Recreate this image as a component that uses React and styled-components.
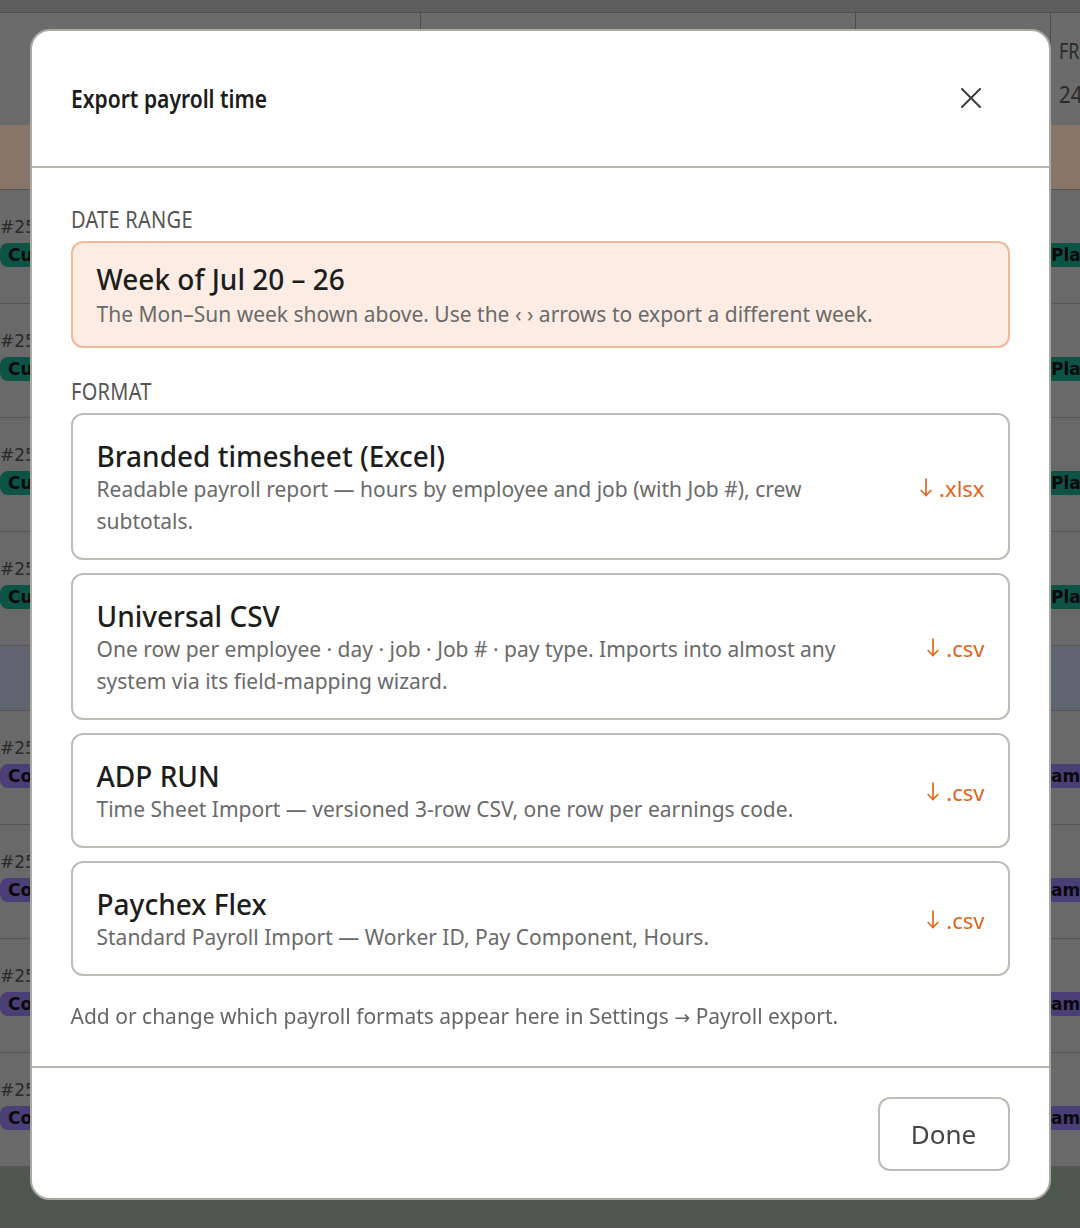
import React from "react";
import styled, { createGlobalStyle } from "styled-components";

const GlobalStyle = createGlobalStyle`
  html, body { margin: 0; padding: 0; }
  body {
    font-family: "Noto Sans", "Open Sans", sans-serif;
    background: #afafaf;
  }
  * { box-sizing: border-box; }
`;

/* narrow display face: Noto Sans squeezed horizontally */
const narrowFace = `
  font-family: "Noto Sans", Roboto, sans-serif;
  transform-origin: left center;
`;

/* ---------- schedule behind the dialog ---------- */

const Schedule = styled.div`
  width: 1080px;
  min-height: 1228px;
  display: flex;
  flex-direction: column;
  background: #849384;
`;

const TopBar = styled.div`
  height: 13px;
  background: #9d9d9d;
  border-bottom: 1px solid #828282;
`;

const DayHeader = styled.div`
  height: 112px;
  display: grid;
  grid-template-columns: 420px 435px 195px 1fr;
  background: #b2b2b2;
`;

const DayCell = styled.div`
  border-left: ${(p) => (p.$first ? "none" : "1px solid #828282")};
  padding: 24px 0 0 8px;
  display: flex;
  flex-direction: column;
  align-items: flex-start;
  gap: 12px;
  color: #494949;
`;

const DayName = styled.span`
  ${narrowFace}
  font-size: 21px;
  transform: scaleX(0.85);
`;

const DayNum = styled.span`
  ${narrowFace}
  font-size: 24px;
  transform: scaleX(0.85);
`;

const Band = styled.div`
  height: ${(p) => p.$h}px;
  background: ${(p) => p.$bg};
  border-bottom: 1px solid #8e8e8e;
`;

const CrewRow = styled.div`
  height: 114px;
  display: flex;
  justify-content: space-between;
  background: #afafaf;
  border-bottom: 1px solid #8e8e8e;
`;

const JobCell = styled.div`
  padding-top: 27px;
  display: flex;
  flex-direction: column;
  align-items: flex-start;
  gap: 6px;
  width: ${(p) => p.$w || "auto"};
  overflow: hidden;
`;

const JobNo = styled.span`
  font-family: "DejaVu Sans", sans-serif;
  font-size: 17px;
  line-height: 20px;
  color: #464646;
`;

const Chip = styled.span`
  height: 24px;
  display: inline-flex;
  align-items: center;
  padding: ${(p) => (p.$flat ? "0 4px 0 1px" : "0 10px 0 8px")};
  border-radius: ${(p) => (p.$flat ? "3px" : "8px")};
  background: ${(p) => p.$bg};
  font-family: "DejaVu Sans", sans-serif;
  font-weight: 700;
  font-size: 17px;
  color: #111;
  white-space: nowrap;
`;

/* ---------- dialog ---------- */

const Overlay = styled.div`
  position: fixed;
  inset: 0;
  background: rgba(0, 0, 0, 0.4);
  display: flex;
  align-items: center;
  justify-content: center;
`;

const Dialog = styled.div`
  width: 1021px;
  background: #fff;
  border: 2px solid #a9a9a2;
  border-radius: 20px;
  display: flex;
  flex-direction: column;
  overflow: hidden;
`;

const DialogHeader = styled.header`
  height: 137px;
  display: flex;
  align-items: center;
  justify-content: space-between;
  padding: 0 58px 0 39px;
  border-bottom: 2px solid #b5b5ae;
`;

const Title = styled.h2`
  ${narrowFace}
  margin: 0;
  font-weight: 600;
  font-size: 26px;
  color: #1c1c1a;
  white-space: nowrap;
  transform: scaleX(0.81);
`;

const CloseButton = styled.button`
  width: 40px;
  height: 40px;
  padding: 0;
  border: none;
  background: none;
  display: flex;
  align-items: center;
  justify-content: center;
  color: #3d3d3d;
`;

const DialogBody = styled.div`
  padding: 37px 39px 34px;
  display: flex;
  flex-direction: column;
`;

const SectionLabel = styled.div`
  ${narrowFace}
  font-size: 23px;
  line-height: 28px;
  letter-spacing: 0.3px;
  color: #555;
  transform: scaleX(0.87);
  margin: ${(p) => (p.$spaced ? "29px 0 8px" : "0 0 8px")};
`;

const RangeBox = styled.div`
  background: #fcece3;
  border: 2px solid #f0b997;
  border-radius: 12px;
  padding: 19px 24px 16px;
`;

const OptionTitle = styled.div`
  font-size: 28px;
  line-height: 34px;
  font-weight: 500;
  color: #1d1d1b;
`;

const OptionText = styled.div`
  font-size: 21px;
  line-height: 32px;
  color: #6a6a6a;
  margin-top: ${(p) => (p.$gap ? "2px" : "0")};
`;

const FormatList = styled.div`
  display: flex;
  flex-direction: column;
  gap: 13px;
`;

const FormatCard = styled.div`
  border: 2px solid #bdbdb8;
  border-radius: 12px;
  padding: 24px 23px 21px 24px;
  display: flex;
  align-items: center;
  gap: 40px;
  background: #fff;
`;

const FormatText = styled.div`
  flex: 1;
  min-width: 0;
`;

const Extension = styled.span`
  display: inline-flex;
  align-items: center;
  gap: 7px;
  font-size: 22px;
  color: #e0661c;
  white-space: nowrap;
`;

const Note = styled.p`
  margin: 25px 0 0;
  font-size: 21px;
  line-height: 30px;
  color: #666;
`;

const ArrowGlyph = styled.span`
  font-family: "DejaVu Sans", sans-serif;
  font-size: 19px;
`;

const DialogFooter = styled.footer`
  border-top: 2px solid #b5b5ae;
  padding: 29px 39px 27px;
  display: flex;
  justify-content: flex-end;
`;

const DoneButton = styled.button`
  width: 132px;
  height: 74px;
  border: 2px solid #bcbcb6;
  border-radius: 12px;
  background: #fff;
  font-family: "Noto Sans", "Open Sans", sans-serif;
  font-size: 26px;
  color: #444;
`;

const CloseIcon = () => (
  <svg width="20" height="20" viewBox="0 0 20 20" fill="none" stroke="currentColor" strokeWidth="2" strokeLinecap="round">
    <line x1="1" y1="1" x2="19" y2="19" />
    <line x1="19" y1="1" x2="1" y2="19" />
  </svg>
);

const DownArrow = () => (
  <svg width="12" height="19" viewBox="0 0 12 19" fill="none" stroke="currentColor" strokeWidth="1.7" strokeLinecap="round" strokeLinejoin="round">
    <line x1="6" y1="1" x2="6" y2="17.5" />
    <polyline points="1.2,12.5 6,17.5 10.8,12.5" />
  </svg>
);

const formats = [
  {
    name: "Branded timesheet (Excel)",
    text: "Readable payroll report — hours by employee and job (with Job #), crew subtotals.",
    ext: ".xlsx",
  },
  {
    name: "Universal CSV",
    text: "One row per employee · day · job · Job # · pay type. Imports into almost any system via its field-mapping wizard.",
    ext: ".csv",
  },
  {
    name: "ADP RUN",
    text: "Time Sheet Import — versioned 3-row CSV, one row per earnings code.",
    ext: ".csv",
  },
  {
    name: "Paychex Flex",
    text: "Standard Payroll Import — Worker ID, Pay Component, Hours.",
    ext: ".csv",
  },
];

const crewA = ["#2514", "#2517", "#2521", "#2526"];
const crewB = ["#2530", "#2533", "#2538", "#2541"];

export default function App() {
  return (
    <>
      <GlobalStyle />
      <Schedule>
        <TopBar />
        <DayHeader>
          <DayCell $first />
          <DayCell />
          <DayCell />
          <DayCell>
            <DayName>FRI</DayName>
            <DayNum>24</DayNum>
          </DayCell>
        </DayHeader>
        <Band $h={65} $bg="#e1c5ad" />
        {crewA.map((job) => (
          <CrewRow key={job}>
            <JobCell>
              <JobNo>{job}</JobNo>
              <Chip $bg="#178c75">Customer</Chip>
            </JobCell>
            <JobCell $w="30px">
              <JobNo>&nbsp;</JobNo>
              <Chip $bg="#178c75" $flat>Plan</Chip>
            </JobCell>
          </CrewRow>
        ))}
        <Band $h={65} $bg="#9da7bb" />
        {crewB.map((job) => (
          <CrewRow key={job}>
            <JobCell>
              <JobNo>{job}</JobNo>
              <Chip $bg="#7d69c8">Commercial</Chip>
            </JobCell>
            <JobCell $w="30px">
              <JobNo>&nbsp;</JobNo>
              <Chip $bg="#7d69c8" $flat>ame</Chip>
            </JobCell>
          </CrewRow>
        ))}
      </Schedule>

      <Overlay>
        <Dialog role="dialog" aria-label="Export payroll time">
          <DialogHeader>
            <Title>Export payroll time</Title>
            <CloseButton aria-label="Close">
              <CloseIcon />
            </CloseButton>
          </DialogHeader>

          <DialogBody>
            <SectionLabel>DATE RANGE</SectionLabel>
            <RangeBox>
              <OptionTitle>Week of Jul 20 – 26</OptionTitle>
              <OptionText $gap>
                The Mon–Sun week shown above. Use the ‹ › arrows to export a different week.
              </OptionText>
            </RangeBox>

            <SectionLabel $spaced>FORMAT</SectionLabel>
            <FormatList>
              {formats.map((f) => (
                <FormatCard key={f.name}>
                  <FormatText>
                    <OptionTitle>{f.name}</OptionTitle>
                    <OptionText>{f.text}</OptionText>
                  </FormatText>
                  <Extension>
                    <DownArrow />
                    {f.ext}
                  </Extension>
                </FormatCard>
              ))}
            </FormatList>

            <Note>
              Add or change which payroll formats appear here in Settings <ArrowGlyph>→</ArrowGlyph> Payroll export.
            </Note>
          </DialogBody>

          <DialogFooter>
            <DoneButton>Done</DoneButton>
          </DialogFooter>
        </Dialog>
      </Overlay>
    </>
  );
}
